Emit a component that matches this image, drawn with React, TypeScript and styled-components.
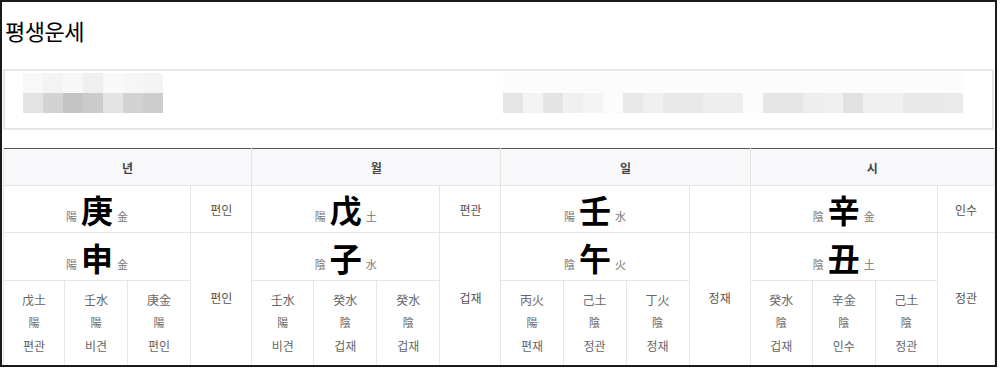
import styled, { createGlobalStyle } from "styled-components";

const GlobalStyle = createGlobalStyle`
  html, body {
    margin: 0;
    padding: 0;
    background: #ffffff;
  }
  body {
    font-family: "Noto Sans CJK KR", "Noto Sans", sans-serif;
    color: #333;
  }
`;

const Frame = styled.div`
  box-sizing: border-box;
  width: 997px;
  height: 367px;
  border: 2px solid #1a1a1a;
  padding: 0 1px 0 1px;
  overflow: hidden;
`;

const Title = styled.h1`
  margin: 0;
  padding: 13px 0 0 2px;
  height: 54px;
  box-sizing: border-box;
  font-size: 22px;
  font-weight: 400;
  line-height: 30px;
  color: #000;
  letter-spacing: -0.5px;
`;

const InfoBox = styled.div`
  box-sizing: border-box;
  height: 61px;
  margin: 13px 0 0 0;
  border: 2px solid #e6e6e6;
  display: flex;
  align-items: flex-start;
  padding-top: 2px;
`;

const Mosaic = styled.div<{ $left: number }>`
  display: grid;
  grid-auto-flow: column;
  grid-template-rows: 20px 20px;
  grid-auto-columns: 20px;
  margin-left: ${(p) => p.$left}px;
`;

const Block = styled.div<{ $c: string }>`
  background: ${(p) => p.$c};
`;

const Table = styled.table`
  margin-top: 18px;
  border-collapse: collapse;
  table-layout: fixed;
  width: 992px;
  border-top: 1px solid #555;
  font-size: 12px;
`;

const Head = styled.th`
  height: 36px;
  background: #f8f8fa;
  border: 1px solid #e6e6e6;
  border-top: none;
  font-weight: 700;
  color: #444;
  font-size: 12px;
  padding: 0;
`;

const Cell = styled.td<{ $h?: number }>`
  border: 1px solid #e6e6e6;
  text-align: center;
  padding: 0;
  height: ${(p) => (p.$h ? `${p.$h}px` : "auto")};
  color: #555;
`;

const SideCell = styled(Cell)<{ $top?: boolean }>`
  vertical-align: ${(p) => (p.$top ? "top" : "middle")};
  padding-top: ${(p) => (p.$top ? "56px" : "0")};
  font-size: 12px;
`;

const Pillar = styled.div`
  display: flex;
  justify-content: center;
  align-items: flex-end;
  gap: 4px;
  line-height: 1;
`;

const Small = styled.span`
  font-size: 11px;
  color: #777;
  padding-bottom: 3px;
`;

const Big = styled.span`
  font-size: 32px;
  font-weight: 700;
  color: #000;
`;

const SubCell = styled(Cell)`
  vertical-align: top;
  padding-top: 7px;
  color: #666;
`;

const SubLine = styled.div<{ $small?: boolean }>`
  height: 23px;
  line-height: 23px;
  font-size: ${(p) => (p.$small ? "11px" : "12px")};
`;

type Hidden = { stem: string; yy: string; god: string };
type Column = {
  name: string;
  top: [string, string, string];
  topGod: string;
  bottom: [string, string, string];
  bottomGod: string;
  hidden: Hidden[];
};

const columns: Column[] = [
  {
    name: "년",
    top: ["陽", "庚", "金"],
    topGod: "편인",
    bottom: ["陽", "申", "金"],
    bottomGod: "편인",
    hidden: [
      { stem: "戊土", yy: "陽", god: "편관" },
      { stem: "壬水", yy: "陽", god: "비견" },
      { stem: "庚金", yy: "陽", god: "편인" },
    ],
  },
  {
    name: "월",
    top: ["陽", "戊", "土"],
    topGod: "편관",
    bottom: ["陰", "子", "水"],
    bottomGod: "겁재",
    hidden: [
      { stem: "壬水", yy: "陽", god: "비견" },
      { stem: "癸水", yy: "陰", god: "겁재" },
      { stem: "癸水", yy: "陰", god: "겁재" },
    ],
  },
  {
    name: "일",
    top: ["陽", "壬", "水"],
    topGod: "",
    bottom: ["陰", "午", "火"],
    bottomGod: "정재",
    hidden: [
      { stem: "丙火", yy: "陽", god: "편재" },
      { stem: "己土", yy: "陰", god: "정관" },
      { stem: "丁火", yy: "陰", god: "정재" },
    ],
  },
  {
    name: "시",
    top: ["陰", "辛", "金"],
    topGod: "인수",
    bottom: ["陰", "丑", "土"],
    bottomGod: "정관",
    hidden: [
      { stem: "癸水", yy: "陰", god: "겁재" },
      { stem: "辛金", yy: "陰", god: "인수" },
      { stem: "己土", yy: "陰", god: "정관" },
    ],
  },
];

const colWidths = [
  [61, 63, 63, 61],
  [62, 63, 63, 61],
  [62, 63, 63, 61],
  [62, 63, 62, 57],
];

const leftBlocks = [
  "#f8f8f8", "#e3e3e3",
  "#f3f3f3", "#d3d3d3",
  "#f7f7f7", "#c4c4c4",
  "#efefef", "#cbcbcb",
  "#f9f9f9", "#e3e3e3",
  "#f6f6f6", "#d2d2d2",
  "#f4f4f4", "#cdcdcd",
];

const rightTone = [
  "#e5e5e5", "#f3f3f3", "#e4e4e4", "#f0f0f0", "#f4f4f4", "#fcfcfc",
  "#e8e8e8", "#f0f0f0", "#e9e9e9", "#e9e9e9", "#eeeeee", "#eeeeee",
  "#fcfcfc", "#e6e6e6", "#e6e6e6", "#eeeeee", "#f0f0f0", "#e1e1e1",
  "#efefef", "#f0f0f0", "#e8e8e8", "#e8e8e8", "#ebebeb",
];
const rightBlocks = rightTone.flatMap((c) => ["#fcfcfc", c]);

const PillarView = ({ v }: { v: [string, string, string] }) => (
  <Pillar>
    <Small>{v[0]}</Small>
    <Big>{v[1]}</Big>
    <Small>{v[2]}</Small>
  </Pillar>
);

export default function App() {
  return (
    <>
      <GlobalStyle />
      <Frame>
        <Title>평생운세</Title>
        <InfoBox>
          <Mosaic $left={18}>
            {leftBlocks.map((c, i) => (
              <Block key={i} $c={c} />
            ))}
          </Mosaic>
          <Mosaic $left={340}>
            {rightBlocks.map((c, i) => (
              <Block key={i} $c={c} />
            ))}
          </Mosaic>
        </InfoBox>
        <Table>
          <colgroup>
            {colWidths.flat().map((w, i) => (
              <col key={i} style={{ width: w }} />
            ))}
          </colgroup>
          <thead>
            <tr>
              {columns.map((c) => (
                <Head key={c.name} colSpan={4}>
                  {c.name}
                </Head>
              ))}
            </tr>
          </thead>
          <tbody>
            <tr>
              {columns.map((c) => [
                <Cell key={c.name + "t"} colSpan={3} $h={46}>
                  <PillarView v={c.top} />
                </Cell>,
                <SideCell key={c.name + "tg"}>{c.topGod}</SideCell>,
              ])}
            </tr>
            <tr>
              {columns.map((c) => [
                <Cell key={c.name + "b"} colSpan={3} $h={47}>
                  <PillarView v={c.bottom} />
                </Cell>,
                <SideCell key={c.name + "bg"} rowSpan={2} $top>
                  {c.bottomGod}
                </SideCell>,
              ])}
            </tr>
            <tr>
              {columns.map((c) =>
                c.hidden.map((h, i) => (
                  <SubCell key={c.name + i} $h={95}>
                    <SubLine>{h.stem}</SubLine>
                    <SubLine $small>{h.yy}</SubLine>
                    <SubLine>{h.god}</SubLine>
                  </SubCell>
                ))
              )}
            </tr>
          </tbody>
        </Table>
      </Frame>
    </>
  );
}
